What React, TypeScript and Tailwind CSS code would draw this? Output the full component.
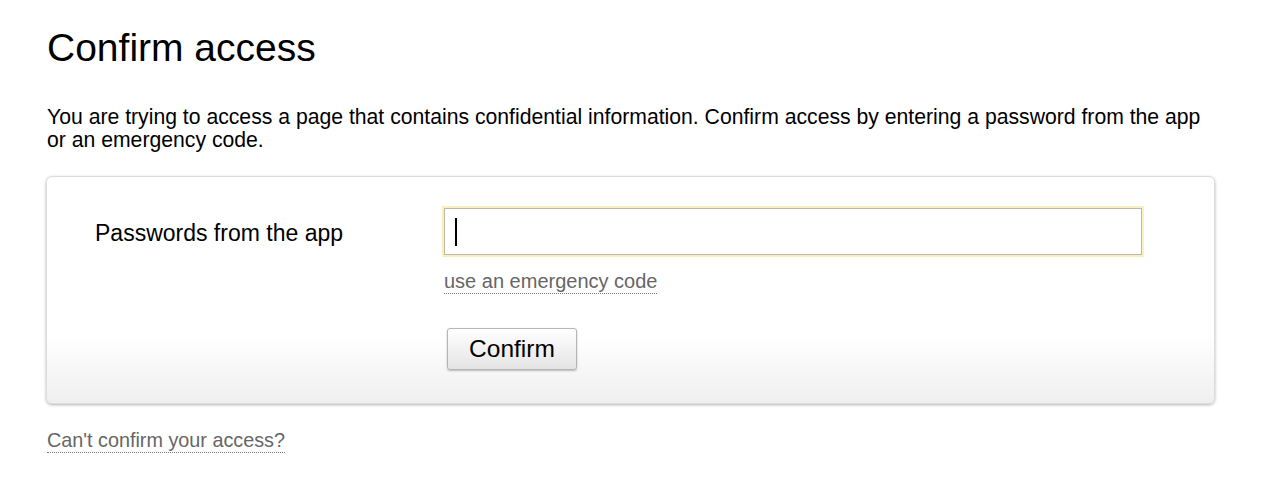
import React from "react";

const FONT = "font-['Liberation_Sans',Arial,Helvetica,sans-serif]";

export default function App() {
  return (
    <div className={`${FONT} min-h-[493px] bg-white px-[47px] pt-[24px] text-black`}>
      <h1 className="text-[39px] leading-[48px] font-normal">Confirm access</h1>

      <p className="mt-[33px] w-[1166px] text-[21.2px] leading-[23px]">
        You are trying to access a page that contains confidential information. Confirm access by entering a password from the app or an emergency code.
      </p>

      <div className="mt-[25px] w-[1169px] -ml-px rounded-[6px] border border-[#dcdcdc] bg-gradient-to-b from-white from-70% to-[#efefef] shadow-[0_1px_3px_rgba(0,0,0,0.3)] pl-[48px] pt-[31px] pb-[33px]">
        <div className="grid grid-cols-[349px_698px]">
          <div className="pt-[12px] text-[23px] leading-[27px]">Passwords from the app</div>
          <div className="flex flex-col items-start">
            <div className="flex h-[47px] w-[698px] items-center border border-[#bdb9a6] bg-white pl-[10px] shadow-[0_0_0_2px_#f8f0c0]">
              <span className="block h-[28px] w-[2px] bg-black" />
            </div>
            <a className="mt-[15px] cursor-pointer border-b border-dotted border-[#777] text-[20px] leading-[23px] text-[#666]">
              use an emergency code
            </a>
            <button
              type="button"
              className="ml-[3px] mt-[34px] h-[42px] w-[130px] rounded-[3px] border border-[#b5b5b5] bg-gradient-to-b from-white to-[#e4e4e4] text-[24.5px] leading-[28px] text-black shadow-[0_1px_2px_rgba(0,0,0,0.25)]"
            >
              Confirm
            </button>
          </div>
        </div>
      </div>

      <a className="mt-[25px] inline-block cursor-pointer border-b border-dotted border-[#777] text-[19.8px] leading-[23px] text-[#666]">
        Can't confirm your access?
      </a>
    </div>
  );
}
